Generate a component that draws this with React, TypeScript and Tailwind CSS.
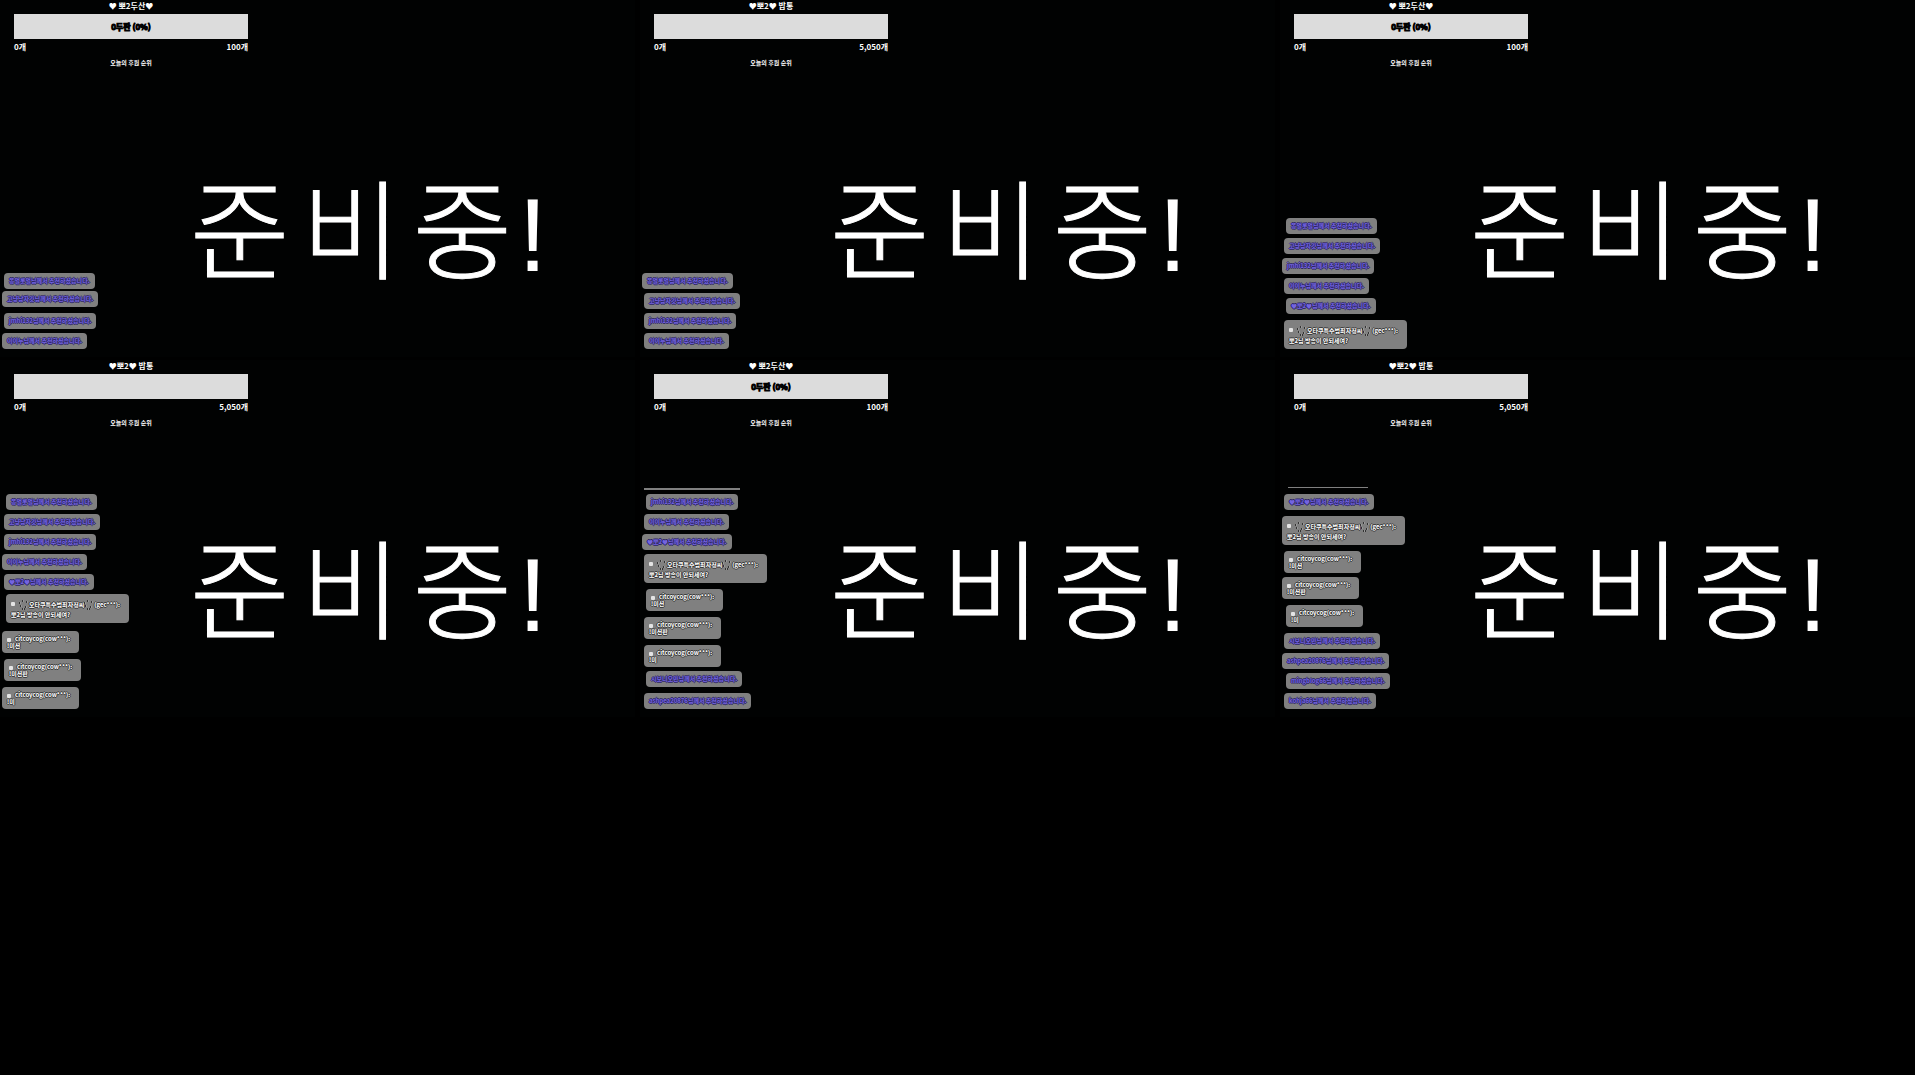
import clsx from 'clsx';

type MessageKind = 'recommend' | 'chat' | 'long';

interface ChatMessage {
  kind: MessageKind;
  user: string;
  text?: string;
  shake: string; // margins of the wobble animation frame
}

interface Goal {
  title: string;
  max: string;
  label?: string;
}

interface Scene {
  id: number;
  goal: Goal;
  cutOff?: string;
  messages: ChatMessage[];
}

const DUNGEON: Goal = { title: '♥ 뽀2두산♥', max: '100개', label: '0두판 (0%)' };
const TABLE: Goal = { title: '♥뽀2♥ 밥통', max: '5,050개' };

const recommend = (user: string, shake: string): ChatMessage => ({ kind: 'recommend', user, shake });
const chat = (text: string, shake: string): ChatMessage => ({ kind: 'chat', user: 'citcoycog(cow***):', text, shake });
const long = (shake: string): ChatMessage => ({
  kind: 'long',
  user: '오타쿠특수범죄자정씨',
  text: '뽀2님 방송이 안되세여?',
  shake,
});

const scenes: Scene[] = [
  {
    id: 1,
    goal: DUNGEON,
    messages: [
      recommend('똥벌롯벌', 'ml-1'),
      recommend('고냥남자갓', 'ml-0.5 mt-0.5'),
      recommend('jmhi132', 'ml-1 mt-1.5'),
      recommend('이이누', 'ml-0.5 mt-1'),
    ],
  },
  {
    id: 2,
    goal: TABLE,
    messages: [
      recommend('똥벌롯벌', 'ml-0.5'),
      recommend('고냥남자갓', 'ml-1 mt-1'),
      recommend('jmhi132', 'ml-1 mt-1'),
      recommend('이이누', 'ml-1 mt-1'),
    ],
  },
  {
    id: 3,
    goal: DUNGEON,
    messages: [
      recommend('똥벌롯벌', 'ml-1.5'),
      recommend('고냥남자갓', 'ml-1 mt-1'),
      recommend('jmhi132', 'ml-0.5 mt-1'),
      recommend('이이누', 'ml-1 mt-1'),
      recommend('♥뽀2♥', 'ml-1.5 mt-1'),
      long('ml-1 mt-1.5'),
    ],
  },
  {
    id: 4,
    goal: TABLE,
    messages: [
      recommend('똥벌롯벌', 'ml-1.5'),
      recommend('고냥남자갓', 'ml-1 mt-1'),
      recommend('jmhi132', 'ml-1 mt-1'),
      recommend('이이누', 'ml-0.5 mt-1'),
      recommend('♥뽀2♥', 'ml-1 mt-1'),
      long('ml-1.5 mt-1'),
      chat('!미션', 'ml-0.5 mt-2'),
      chat('!미션판', 'ml-1 mt-1.5'),
      chat('!미', 'ml-0.5 mt-1.5'),
    ],
  },
  {
    id: 5,
    goal: DUNGEON,
    cutOff: 'ml-1 w-24 h-0.5',
    messages: [
      recommend('jmhi132', 'ml-1.5 mt-1'),
      recommend('이이누', 'ml-1 mt-1'),
      recommend('♥뽀2♥', 'ml-0.5 mt-1'),
      long('ml-1 mt-1'),
      chat('!미션', 'ml-1.5 mt-1.5'),
      chat('!미션판', 'ml-1 mt-1.5'),
      chat('!미', 'ml-1 mt-1.5'),
      recommend('시보니오만', 'ml-1.5 mt-1'),
      recommend('ashpea20876', 'ml-1 mt-1.5'),
    ],
  },
  {
    id: 6,
    goal: TABLE,
    cutOff: 'ml-2 w-20 h-px',
    messages: [
      recommend('♥뽀2♥', 'ml-1 mt-1.5'),
      long('ml-0.5 mt-1.5'),
      chat('!미션', 'ml-1 mt-1.5'),
      chat('!미션판', 'ml-0.5 mt-1'),
      chat('!미', 'ml-1.5 mt-1.5'),
      recommend('시보니오만', 'ml-1 mt-1.5'),
      recommend('ashpea20876', 'ml-0.5 mt-1'),
      recommend('mingblog66', 'ml-1.5 mt-1'),
      recommend('kohja66', 'ml-1 mt-1'),
    ],
  },
];

function GoalBar({ goal }: { goal: Goal }) {
  return (
    <header className="w-[234px] ml-[14px] text-[8px] leading-3 font-bold text-white">
      <h2 className="text-center">{goal.title}</h2>
      <div className="mt-0.5 h-[25px] bg-[#dcdcdc] text-black flex items-center justify-center [-webkit-text-stroke:1px_#000]">
        {goal.label}
      </div>
      <div className="mt-0.5 flex justify-between">
        <span>0개</span>
        <span>{goal.max}</span>
      </div>
      <p className="mt-1 text-center text-[6px]">오늘의 후원 순위</p>
    </header>
  );
}

function Swirl() {
  return (
    <svg viewBox="0 0 10 12" className="shrink-0 w-[10px] h-3" fill="none">
      <path d="M0 5h2M3 3h2M7 4h2M1 8h2M6 9h2M3 11h3" stroke="#333" strokeWidth="2" />
      <path d="M1 5h1M4 3h1M8 4h1M2 8h1M7 9h1M4 11h1" stroke="#fff" strokeWidth="1" />
    </svg>
  );
}

function Badge() {
  return <span className="inline-block size-1 shrink-0 rounded-[1px] bg-[#e4e4e4] mr-1 align-middle" />;
}

const outline =
  '[text-shadow:1px_0_0_#333,-1px_0_0_#333,0_1px_0_#333,0_-1px_0_#333]';

function Message({ message }: { message: ChatMessage }) {
  if (message.kind === 'recommend') {
    return (
      <li
        className={clsx(
          'h-4 shrink-0 rounded-sm bg-[#808080] px-[5px] text-[6px] leading-4 font-bold text-[#7465e0] whitespace-nowrap',
          '[text-shadow:1px_0_0_#2c2468,-1px_0_0_#2c2468,0_1px_0_#2c2468,0_-1px_0_#2c2468]',
          message.shake
        )}
      >
        {message.user}님께서 추천하셨습니다.
      </li>
    );
  }

  if (message.kind === 'long') {
    return (
      <li
        className={clsx(
          'h-[29px] w-[123px] shrink-0 rounded-sm bg-[#808080] px-[5px] pt-1 text-[6px] font-bold text-white whitespace-nowrap',
          outline,
          message.shake
        )}
      >
        <div className="flex h-3 items-center">
          <Badge />
          <Swirl />
          {message.user}
          <Swirl />
          (gec***):
        </div>
        <p className="leading-[9px]">{message.text}</p>
      </li>
    );
  }

  return (
    <li
      className={clsx(
        'h-[22px] w-[77px] shrink-0 rounded-sm bg-[#808080] px-[5px] pt-1 text-[6px] leading-[7px] font-bold text-white whitespace-nowrap',
        outline,
        message.shake
      )}
    >
      <div>
        <Badge />
        {message.user}
      </div>
      <p>{message.text}</p>
    </li>
  );
}

function SceneTile({ scene }: { scene: Scene }) {
  return (
    <section className="grid aspect-video overflow-hidden bg-[#010202]">
      <div className="col-start-1 row-start-1">
        <GoalBar goal={scene.goal} />
      </div>
      <h1 className="col-start-1 row-start-1 flex items-baseline pl-[190px] pt-36 text-[108px] leading-[160px] font-light text-white whitespace-nowrap">
        <span className="flex gap-3 [-webkit-text-stroke:1px_#fff]">
          <span>준</span>
          <span>비</span>
          <span>중</span>
        </span>
        <span className="ml-1.5 font-['Liberation_Sans',sans-serif] text-[104px] font-normal">!</span>
      </h1>
      <ul className="col-start-1 row-start-1 self-end flex flex-col items-start pb-2">
        {scene.cutOff && <li className={clsx('bg-[#808080]', scene.cutOff)} />}
        {scene.messages.map((message, i) => (
          <Message key={i} message={message} />
        ))}
      </ul>
    </section>
  );
}

export default function App() {
  return (
    <main className="min-h-screen bg-black font-['Noto_Sans_CJK_KR',sans-serif]">
      <div className="grid grid-cols-3 gap-x-[5px] gap-y-[3px]">
        {scenes.map((scene) => (
          <SceneTile key={scene.id} scene={scene} />
        ))}
      </div>
    </main>
  );
}
